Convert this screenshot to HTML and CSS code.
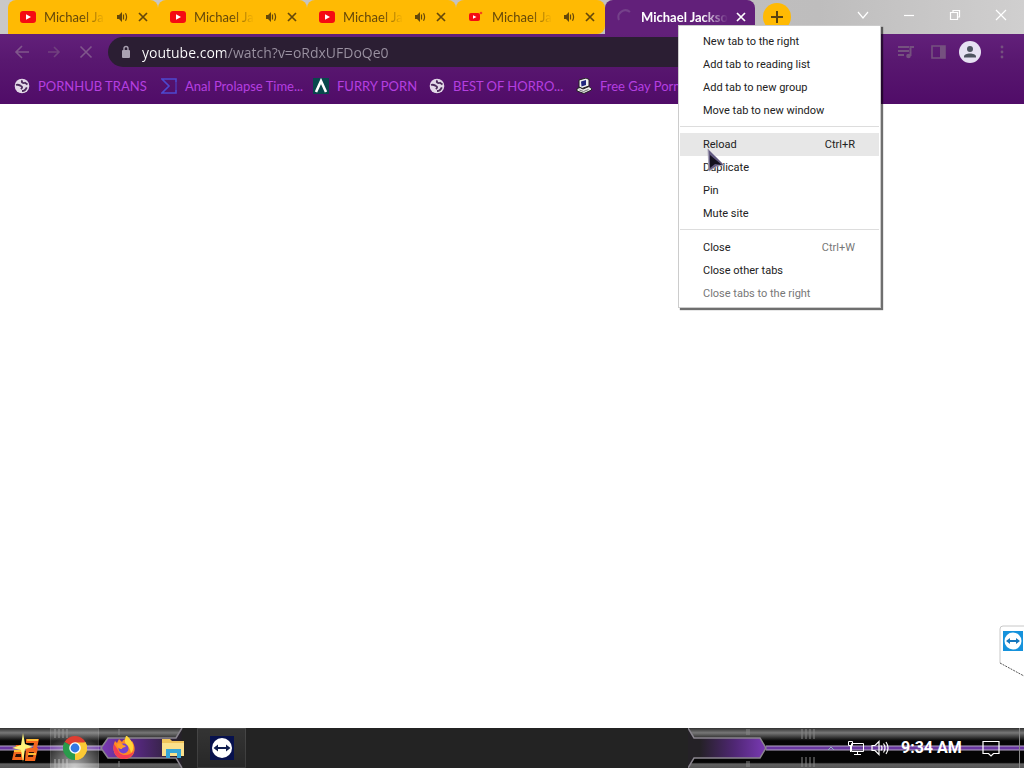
FILE: index.html
```html
<!DOCTYPE html>
<html lang="en">
<head>
<meta charset="utf-8">
<title>Michael Jackson</title>
<link rel="stylesheet" href="styles.css">
</head>
<body>
<svg class="defs" aria-hidden="true">
  <symbol id="yt" viewBox="0 0 16 16"><rect y="2" width="16" height="12" rx="3" fill="#f50b12"/><path d="M6 5.3v5.4L11 8z" fill="#fff"/></symbol>
  <symbol id="yt-small" viewBox="0 0 16 16"><rect x="1" y="4" width="11" height="8" rx="2" fill="#f50b12"/><path d="M5 6.2v3.6L8.500 8z" fill="#fff"/><circle cx="13" cy="4" r="1.300" fill="#f5451c"/></symbol>
  <symbol id="speaker" viewBox="0 0 12 12"><path d="M1 4h2l3-3v10L3 8H1z" fill="currentColor"/><path d="M7.500 3.500v5M9.500 2.200c1.300 2.300 1.300 5.300 0 7.600" fill="none" stroke="currentColor" stroke-width="1.200"/></symbol>
  <symbol id="cross" viewBox="0 0 10 10"><path d="M1 1l8 8M9 1L1 9" fill="none" stroke="currentColor" stroke-width="1.700"/></symbol>
  <symbol id="globe" viewBox="0 0 16 16"><circle cx="8" cy="8" r="7.300" fill="#e3d8e8"/><path d="M2 7c2.500-.8 3.500.2 5 1 2 .8 1 2.200-.2 3M8.500 2.500c-2 1.500.5 3.200 2.500 2.300l2.500 1.700M8 13c2.500 0 4-1.700 4.800-3.700" fill="none" stroke="#4b2a5b" stroke-width="1.800"/></symbol>
</svg>

<header class="browser">
  <div class="tabstrip">
    <div class="tab"><svg class="fav"><use href="#yt"/></svg><span class="tab-title">Michael Ja</span><svg class="sound"><use href="#speaker"/></svg><button class="close" aria-label="Close tab"><svg><use href="#cross"/></svg></button></div>
    <div class="tab"><svg class="fav"><use href="#yt"/></svg><span class="tab-title">Michael Ja</span><svg class="sound"><use href="#speaker"/></svg><button class="close" aria-label="Close tab"><svg><use href="#cross"/></svg></button></div>
    <div class="tab"><svg class="fav"><use href="#yt"/></svg><span class="tab-title">Michael Ja</span><svg class="sound"><use href="#speaker"/></svg><button class="close" aria-label="Close tab"><svg><use href="#cross"/></svg></button></div>
    <div class="tab"><svg class="fav"><use href="#yt-small"/></svg><span class="tab-title">Michael Ja</span><svg class="sound"><use href="#speaker"/></svg><button class="close" aria-label="Close tab"><svg><use href="#cross"/></svg></button></div>
    <div class="tab active"><svg class="fav" viewBox="0 0 16 16"><path d="M2 11A7 7 0 0 1 13 3" fill="none" stroke="#75418a" stroke-width="2"/></svg><span class="tab-title">Michael Jackso</span><button class="close" aria-label="Close tab"><svg><use href="#cross"/></svg></button></div>
    <button class="new-tab" aria-label="New tab"><svg viewBox="0 0 14 14"><path d="M7 1v12M1 7h12" stroke="#5b4310" stroke-width="2"/></svg></button>
    <div class="window-buttons">
      <button aria-label="Search tabs"><svg viewBox="0 0 12 12"><path d="M1 3l5 6 5-6"/></svg></button>
      <button aria-label="Minimize"><svg viewBox="0 0 12 12"><path d="M1 6.500h10"/></svg></button>
      <button aria-label="Restore"><svg viewBox="0 0 12 12"><path d="M1.500 3.500h7v7h-7zM4 3V1.500h6.500V8H9"/></svg></button>
      <button aria-label="Close window"><svg viewBox="0 0 12 12"><path d="M1 1l10 10M11 1L1 11"/></svg></button>
    </div>
  </div>

  <div class="toolbar">
    <nav class="nav-buttons">
      <button aria-label="Back"><svg viewBox="0 0 16 16"><path d="M15 8H2M8 2L2 8l6 6"/></svg></button>
      <button class="forward" aria-label="Forward"><svg viewBox="0 0 16 16"><path d="M2 8h11M8 3l5 5-5 5"/></svg></button>
      <button aria-label="Stop loading"><svg viewBox="0 0 16 16"><path d="M2.500 2.500l11 11M13.500 2.500l-11 11"/></svg></button>
    </nav>
    <div class="omnibox">
      <svg class="lock" viewBox="0 0 10 14"><rect x="1" y="5" width="8" height="8" rx="1" fill="#aaa1b2"/><path d="M3 6V3.500a2 2 0 0 1 4 0V6" fill="none" stroke="#aaa1b2" stroke-width="1.400"/></svg>
      <input class="url" type="text" aria-label="Address" value="youtube.com/watch?v=oRdxUFDoQe0">
    </div>
    <div class="tools">
      <button aria-label="Media controls"><svg viewBox="0 0 18 16"><path d="M1 3h11M1 7h11M1 11h6M13.500 12V3H17" fill="none" stroke="#75517f" stroke-width="2"/><circle cx="11.500" cy="12" r="2.300" fill="#75517f"/></svg></button>
      <button aria-label="Side panel"><svg viewBox="0 0 18 16"><path d="M3 2h13v12H3z" fill="none" stroke="#75517f" stroke-width="1.600"/><path d="M11 2h5v12h-5z" fill="#75517f"/></svg></button>
      <button class="avatar" aria-label="Profile"><svg viewBox="0 0 22 22"><circle cx="11" cy="11" r="11" fill="#e6e2f2"/><circle cx="11" cy="8" r="3" fill="#4e5560"/><path d="M5 16.500v-1c0-4 12-4 12 0v1z" fill="#4e5560"/></svg></button>
      <button aria-label="Menu"><svg viewBox="0 0 18 16"><g fill="#75517f"><circle cx="9" cy="3" r="1.400"/><circle cx="9" cy="8" r="1.400"/><circle cx="9" cy="13" r="1.400"/></g></svg></button>
    </div>
  </div>

  <nav class="bookmarks">
    <a href="#" class="w-m"><svg><use href="#globe"/></svg><span>PORNHUB TRANS</span></a>
    <a href="#" class="w-l"><svg viewBox="0 0 16 16"><path d="M15 4V1H1l7 7-7 7h14v-3" fill="none" stroke="#4d49cf" stroke-width="1.600"/><path d="M15 4v8" stroke="#4d49cf"/></svg><span>Anal Prolapse Time...</span></a>
    <a href="#" class="w-s"><svg viewBox="0 0 16 16"><path d="M0 0h16v16H0z" fill="#08474c"/><path d="M3 14L8 3l5 11" fill="none" stroke="#fff" stroke-width="2.600"/></svg><span>FURRY PORN</span></a>
    <a href="#" class="w-m"><svg><use href="#globe"/></svg><span>BEST OF HORRO...</span></a>
    <a href="#" class="w-l"><svg viewBox="0 0 16 16"><path d="M3 2l7-2 3 1.500V8l-7 2.500L3 9z" fill="#eee" stroke="#222"/><path d="M5 3.500l5-1.500v5L5.500 8.500z" fill="#20267c"/><path d="M1 10.500l3-1 3 1.500 6-2.500 2.500 2V12L8 15.500 1 13z" fill="#e9e9e9" stroke="#222"/><path d="M3.500 12l4 1.500 5-2" fill="none" stroke="#777"/></svg><span>Free Gay Porn</span></a>
  </nav>
</header>

<main class="page">
  <button class="side-handle" aria-label="TeamViewer panel"><svg viewBox="0 0 25 54"><path d="M25 1H4Q1 1 1 4v34l24 13z" fill="#fff"/><path d="M25 1H4Q1 1 1 4v34" fill="none" stroke="#c8c8c8"/><path d="M1 38l24 13" fill="none" stroke="#555" stroke-dasharray="2 1"/><path d="M4 6h20v20H4z" fill="#1592dc"/><circle cx="14" cy="16" r="8.500" fill="#fff"/><path d="M7 16l4-3v2h6v-2l4 3-4 3v-2h-6v2z" fill="#1577bd"/></svg></button>
</main>

<footer class="taskbar">
  <svg class="deco deco-left" viewBox="0 0 192 40" aria-hidden="true">
    <defs>
      <linearGradient id="rail" x2="0" y2="1"><stop offset="0" stop-color="#303030"/><stop offset=".12" stop-color="#777"/><stop offset=".32" stop-color="#050505"/><stop offset=".86" stop-color="#050505"/><stop offset=".9" stop-color="#606060"/><stop offset="1" stop-color="#555"/></linearGradient>
      <linearGradient id="glowL"><stop offset="0" stop-color="#7a3ab5"/><stop offset=".5" stop-color="#502775"/><stop offset="1" stop-color="#242126"/></linearGradient>
      <linearGradient id="glowR"><stop offset=".15" stop-color="#242126"/><stop offset=".6" stop-color="#502775"/><stop offset="1" stop-color="#7a3ab5"/></linearGradient>
    </defs>
    <path d="M0 0h182l-6 10v20l6 10H0z" fill="url(#rail)"/>
    <path d="M0 20h102" stroke="#b5a8c7" stroke-width="5"/><path d="M0 20h102" stroke="#6937a0" stroke-width="3"/>
    <path d="M182 0l-6 10h-68l-7 10 7 10h68l6 10" fill="url(#glowL)" stroke="#8a858e" stroke-width="1.500"/>
    <path d="M55 1v9M59 1v9M63 1v9M67 1v9M55 31v9M59 31v9M63 31v9M67 31v9M119 1v6M119 33v6" stroke="#888"/>
  </svg>
  <svg class="deco deco-right" viewBox="0 0 336 40" aria-hidden="true">
    <path d="M0 0h336v40H0l6-10V10z" fill="url(#rail)"/>
    <path d="M78 20h258" stroke="#b5a8c7" stroke-width="5"/><path d="M78 20h258" stroke="#6937a0" stroke-width="3"/>
    <path d="M0 0l6 10h66l6 10-6 10H6L0 40" fill="url(#glowR)" stroke="#8a858e" stroke-width="1.500"/>
    <path d="M59 1v6M61 1v6M59 33v6M61 33v6M114 1v10M118 1v10M122 1v10M126 1v10M114 29v10M118 29v10M122 29v10M126 29v10M331.500 0v40" stroke="#888"/>
  </svg>
  <div class="apps">
    <button aria-label="Start"><svg viewBox="0 0 30 30"><path d="M5 12h9l-1 4H4zM3 18h10v9H1zM15 6h13l-2 9h-4l1-5h-8zM15 15h12l-3 13H14z" fill="#f4671d"/><path d="M5 21h5v3H4zM18 19h5l-1 5h-5z" fill="#2a0e08"/><path d="M17 21h8M3 18h10M16 7h11" stroke="#ffbd36" stroke-width="2"/><path d="M12 0l2 11 8 3-8 2-2 13-2-12-9-2 9-3z" fill="#fff37c"/></svg></button>
    <button class="running current" aria-label="Chrome"><svg viewBox="0 0 24 24"><path d="M12 12L1.600 6A12 12 0 0 1 22.400 6z" fill="#df3e31"/><path d="M12 12l10.400-6A12 12 0 0 1 12 24z" fill="#fcc934"/><path d="M12 12v12A12 12 0 0 1 1.600 6z" fill="#2a9b4b"/><path d="M12 6.500h10.600a12 12 0 0 1-10.600 17.500l4.800-9z" fill="#fcc934"/><circle cx="12" cy="12" r="5.800" fill="#fff"/><circle cx="12" cy="12" r="4.400" fill="#3479e3"/></svg></button>
    <button aria-label="Firefox"><svg viewBox="0 0 24 24"><path d="M3 5l2 2 2-4 3 3c2-4 5-2 5-5 3 2 4 4 4 5l1-1c6 9 1 18-8 18S-1 14 3 5z" fill="#ff8a22"/><path d="M2 8c-2 9 3 15 10 15 5 0 9-3 10-8-4 5-14 6-16-1z" fill="#f33c55"/><path d="M15 0c7 6 8 13 4 17-1-9-9-7-5-17z" fill="#ffd438"/><circle cx="11.500" cy="12.500" r="5" fill="#7542cf"/><path d="M5 8c3-1 5-1 6 1l3 1c-1 2-4 1-4 3-3 0-5-2-5-5z" fill="#ff9c28"/></svg></button>
    <button aria-label="File Explorer"><svg viewBox="0 0 24 22"><path d="M1 2h8l2 2h12v15H1z" fill="#f0c45b"/><path d="M1 6h22v13H1z" fill="#fae08c"/><path d="M5 12h15v9h-4v-5H9v5H5z" fill="#36a6d8"/></svg></button>
    <button class="running" aria-label="TeamViewer"><svg viewBox="0 0 24 24"><path d="M0 0h24v24H0z" fill="#07114d"/><circle cx="12" cy="12" r="10" fill="#fff"/><path d="M3.500 12L8 8.500V11h8V8.500l4.500 3.500-4.500 3.500V13H8v2.500z" fill="#101e4f"/></svg></button>
  </div>
  <div class="tray">
    <svg class="t-caret" viewBox="0 0 8 6"><path d="M1 5l3-3 3 3" stroke="#8fb0bd" fill="none"/></svg>
    <svg class="t-icon" viewBox="0 0 16 16"><path d="M3.500 3.500h12v8h-12zM9.500 12v3M6 14.500h7M.500 1.500h4v4h-4zM2.500 6v6" fill="none" stroke="#fff"/></svg>
    <svg class="t-sound" viewBox="0 0 18 16"><path d="M1 5.500h3l4-4v13l-4-4H1zM10 5.500q2 2.500 0 5M12.500 3.500q3 4.500 0 9M15 2q4 6 0 12" fill="none" stroke="#fff" stroke-width="1.200"/></svg>
    <time class="clock">9:34 AM</time>
    <svg class="t-note" viewBox="0 0 18 18"><path d="M1 2.500h16v12h-5.500L9 17l-2.500-2.500H1z" fill="none" stroke="#fff" stroke-width="1.200"/></svg>
  </div>
</footer>

<div class="menu" role="menu">
  <button role="menuitem">New tab to the right</button>
  <button role="menuitem">Add tab to reading list</button>
  <button role="menuitem">Add tab to new group</button>
  <button role="menuitem">Move tab to new window</button>
  <hr>
  <button role="menuitem" class="hover">Reload<span>Ctrl+R</span></button>
  <button role="menuitem">Duplicate</button>
  <button role="menuitem">Pin</button>
  <button role="menuitem">Mute site</button>
  <hr>
  <button role="menuitem">Close<span class="dim">Ctrl+W</span></button>
  <button role="menuitem">Close other tabs</button>
  <button role="menuitem" class="dim">Close tabs to the right</button>
</div>
<svg class="cursor" viewBox="0 0 18 24" aria-hidden="true"><path d="M1 1l16 16-7 1-8 5z" fill="#625a80" stroke="#aaa5b8"/><path d="M3 7l12 10-7-1-5 4z" fill="#15121f"/></svg>
</body>
</html>
```
FILE: styles.css
```css
* { box-sizing: border-box; }
body {
  margin: 0;
  min-height: 100vh;
  display: flex;
  flex-direction: column;
  position: relative;
  overflow: hidden;
  background: #fff;
  font-family: "Open Sans", "Noto Sans", sans-serif;
}
button {
  margin: 0;
  padding: 0;
  border: 0;
  background: none;
  font: inherit;
  color: inherit;
  display: flex;
  align-items: center;
  justify-content: center;
}
svg { display: block; flex: none; }
.defs { position: absolute; width: 0; height: 0; }

.browser { background: linear-gradient(#62207a 34px, #591870 60px, #500c68); }
.tabstrip {
  height: 34px;
  padding-left: 8px;
  display: flex;
  background: linear-gradient(90deg, #c9c8c8, #bebdbd 80%, #d0cfcf);
}
.tab {
  width: 149px;
  padding: 0 10px 0 12px;
  display: flex;
  align-items: center;
  position: relative;
  background: #ffba03;
  color: #65480a;
  font-family: Lato, sans-serif;
  font-size: 13px;
  border-radius: 8px 8px 0 0;
}
.tab:first-child, .tab.active { width: 150px; }
.tab:not(.active)::after {
  content: "";
  position: absolute;
  right: -1px;
  top: 8px;
  width: 1px;
  height: 19px;
  background: #8c6915;
}
.tab:nth-child(4) { border-bottom-right-radius: 8px; }
.tab:nth-child(4)::after { display: none; }
.fav { width: 16px; height: 16px; margin-right: 8px; }
.tab-title {
  flex: 1;
  white-space: nowrap;
  mask-image: linear-gradient(90deg, #000 65%, transparent);
}
.sound { width: 12px; height: 12px; margin: 0 10px 0 11px; }
.close svg { width: 10px; height: 10px; }
.tab.active { background: #62207a; color: #fff; font-weight: 700; }
.active .tab-title { mask-image: linear-gradient(90deg, #000 70%, transparent); margin-right: 8px; }
.new-tab {
  width: 28px;
  height: 28px;
  margin: 3px 0 0 8px;
  border-radius: 50%;
  background: #ffba03;
}
.new-tab svg { width: 14px; height: 14px; }
.window-buttons { margin-left: auto; display: flex; height: 29px; }
.window-buttons button { width: 46px; }
.window-buttons svg { width: 12px; height: 12px; fill: none; stroke: #fff; stroke-width: 1.2; }

.toolbar { height: 36px; padding: 0 12px 0 14px; display: flex; align-items: center; }
.nav-buttons { display: flex; gap: 16px; margin-right: 14px; }
.nav-buttons svg { width: 16px; height: 16px; fill: none; stroke: #80578c; stroke-width: 1.6; }
.nav-buttons .forward svg { stroke: #71417f; }
.omnibox {
  flex: 1;
  height: 30px;
  padding: 0 13px;
  display: flex;
  align-items: center;
  gap: 11px;
  border-radius: 15px;
  background: #2b1e33;
}
.lock { width: 10px; height: 14px; }
.url {
  flex: 1;
  min-width: 0;
  padding: 0;
  border: 0;
  outline: 0;
  font-family: inherit;
  font-size: 14px;
  color: transparent;
  background: linear-gradient(90deg, #fff 84px, #9b92a2 84px);
  background-clip: text;
}
.tools { display: flex; align-items: center; gap: 12px; margin-left: 24px; }
.tools button { width: 20px; }
.tools svg { width: 18px; height: 16px; }
.tools .avatar svg { width: 22px; height: 22px; }

.bookmarks { height: 34px; padding: 0 0 2px 14px; display: flex; align-items: center; overflow: hidden; }
.bookmarks a {
  display: flex;
  align-items: center;
  gap: 8px;
  color: #b53fe0;
  font-family: Lato, sans-serif;
  font-size: 13px;
  text-decoration: none;
  white-space: nowrap;
}
.bookmarks svg { width: 16px; height: 16px; }
.w-s { width: 116px; }
.w-m { width: 147px; }
.w-l { width: 152px; }

.page { flex: 1; position: relative; }
.side-handle { position: absolute; right: 0; bottom: 49px; }
.side-handle svg { width: 25px; height: 54px; }

.taskbar {
  height: 40px;
  display: flex;
  justify-content: space-between;
  position: relative;
  background: #232323;
}
.deco { position: absolute; top: 0; height: 40px; }
.deco-left { left: 0; width: 192px; }
.deco-right { right: 0; width: 336px; }
.apps, .tray { display: flex; align-items: center; position: relative; }
.apps { padding-left: 1px; }
.apps button { width: 49px; height: 40px; }
.apps svg { width: 24px; height: 24px; }
.apps button:first-child svg { width: 30px; height: 30px; }
.running { background: linear-gradient(#ffffff14, #ffffff05); box-shadow: inset 0 0 0 1px #ffffff18; }
.current.running { background: radial-gradient(circle at 50% 100%, #ffffffb0, #ffffff20 70%); }
.tray { padding-right: 24px; }
.t-caret { width: 8px; height: 6px; margin-right: 13px; }
.t-icon { width: 16px; height: 16px; margin-right: 7px; }
.t-sound { width: 18px; height: 16px; margin-right: 12px; }
.clock {
  width: 60px;
  margin-right: 21px;
  color: #fff;
  font: bold 16px/40px Roboto, "Liberation Sans", sans-serif;
  white-space: nowrap;
}
.t-note { width: 18px; height: 18px; }

.menu {
  position: absolute;
  left: 678px;
  top: 25px;
  width: 203px;
  padding: 4px 1px 2px;
  border: 1px solid #ccc;
  background: #fff;
  box-shadow: 2px 2px 1px #00000090;
  color: #222;
  font: 11px Roboto, "Liberation Sans", sans-serif;
}
.menu button {
  width: 100%;
  height: 23px;
  padding: 0 24px 0 23px;
  justify-content: space-between;
}
.menu hr { margin: 4px 0 6px; border: 0; border-top: 1px solid #ddd; }
.menu .hover { background: #e7e7e7; }
.menu .dim { color: #777; }
.cursor { position: absolute; left: 707px; top: 148px; width: 18px; height: 24px; }
```
